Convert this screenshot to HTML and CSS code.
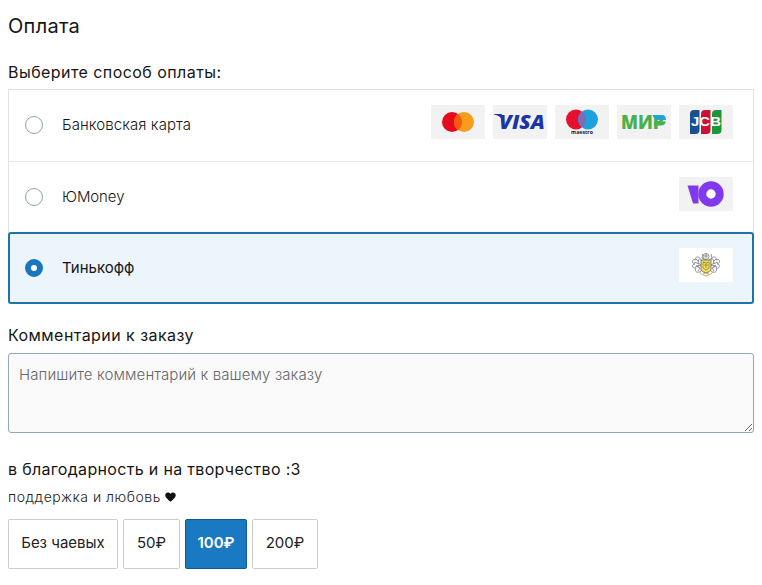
FILE: index.html
```html
<!DOCTYPE html>
<html lang="ru">

<head>
    <meta charset="utf-8">
    <title>Оплата</title>
    <link rel="stylesheet" href="styles.css">
</head>

<body>
    <form class="checkout">
        <h1 class="title">Оплата</h1>
        <p class="label label-pay">Выберите способ оплаты:</p>
        <div class="methods">
            <label class="method">
                <input class="radio" type="radio" name="pay">
                <span class="method-name">Банковская карта</span>
                <span class="logos">
                    <svg class="logo" viewBox="0 0 54 34">
                        <circle cx="21" cy="17" r="10" fill="#e60a1e" />
                        <circle cx="33" cy="17" r="10" fill="#f59d1c" />
                        <path d="M27 9a10 10 0 0 1 0 16a10 10 0 0 1 0-16z" fill="#fa5a0c" />
                    </svg>
                    <svg class="logo" viewBox="0 0 54 34">
                        <path d="M1 9h7.500l3 9C9 13 6 10.500 1 9.500z" fill="#1b35a8" />
                        <text class="visa" x="6" y="24" textLength="46" lengthAdjust="spacingAndGlyphs">VISA</text>
                    </svg>
                    <svg class="logo" viewBox="0 0 54 34">
                        <circle cx="21" cy="14.500" r="10" fill="#e6102c" />
                        <circle cx="33" cy="14.500" r="10" fill="#1ea0dc" />
                        <path d="M27 6.500a10 10 0 0 1 0 16a10 10 0 0 1 0-16z" fill="#7d6cb8" />
                        <text class="maestro" x="16" y="29" textLength="22" lengthAdjust="spacingAndGlyphs">maestro</text>
                    </svg>
                    <svg class="logo" viewBox="0 0 54 34">
                        <text class="mir" x="4" y="24" textLength="43" lengthAdjust="spacingAndGlyphs">МИР</text>
                        <path d="M35.500 10H45q4 0 4 5h-7q-5 0-6.500-5z" fill="#25a3d8" />
                        <path d="M37 16.500h12q-1 4-5 4h-7z" fill="#4ab04e" />
                    </svg>
                    <svg class="logo" viewBox="0 0 54 34">
                        <path d="M15 5h5.500v20q0 4-4 4h-5.500V9q0-4 4-4z" fill="#1b4f94" />
                        <path d="M26 5h5.500v20q0 4-4 4h-5.500V9q0-4 4-4z" fill="#cc1136" />
                        <path d="M37 5h5.500v20q0 4-4 4h-5.500V9q0-4 4-4z" fill="#1d9639" />
                        <text class="jcb" x="12" y="21" textLength="30" lengthAdjust="spacingAndGlyphs">JCB</text>
                    </svg>
                </span>
            </label>
            <label class="method">
                <input class="radio" type="radio" name="pay">
                <span class="method-name name-yoo">ЮMoney</span>
                <span class="logos">
                    <svg class="logo" viewBox="0 0 54 34">
                        <path d="M8.500 8.500h11v18h-5.500z" fill="#8139ef" />
                        <circle cx="32" cy="17" r="8.700" fill="#fff" stroke="#8139ef" stroke-width="8" />
                    </svg>
                </span>
            </label>
            <label class="method method-active">
                <input class="radio" type="radio" name="pay" checked>
                <span class="method-name">Тинькофф</span>
                <span class="logos">
                    <svg class="logo logo-white" viewBox="0 0 54 34" fill="none" stroke="#85858d" stroke-width=".9">
                        <circle cx="27" cy="8.500" r="3" />
                        <path d="M24 6l-1 4 3 2m4 0l3-2-1-4M25 8h4M27 5.500v5" />
                        <path d="M22 12c-2-5-7-3-5 0-4-2-5 3-1 4-4 0-3 5 1 4-2 3 1 6 5 3M20 11l-1 4 3 2-5 1 4 2-2 3M15 14l5 2M17 11l3 3M16 19l4-1" />
                        <path d="M32 12c2-5 7-3 5 0 4-2 5 3 1 4 4 0 3 5-1 4 2 3-1 6-5 3M34 11l1 4-3 2 5 1-4 2 2 3M39 14l-5 2M37 11l-3 3M38 19l-4-1" />
                        <path d="M22 12h10v10q-1 2-5 3-4-1-5-3z" fill="#e9dc68" stroke="#777565" />
                        <path d="M24 14l3 1 3-1v6l-3 2-3-2zM27 15v5M25 17h4" stroke="#a8932f" />
                        <path d="M20 24q3 3 7 4 4-1 7-4M24 26l3-1 3 1" stroke="#bba95a" />
                    </svg>
                </span>
            </label>
        </div>

        <p class="label label-comment">Комментарии к заказу</p>
        <textarea class="comment" placeholder="Напишите комментарий к вашему заказу"></textarea>

        <p class="label label-tips">в благодарность и на творчество :3</p>
        <p class="hint">поддержка и любовь
            <svg class="heart" viewBox="0 0 11 10">
                <path d="M5.500 9.800C3 7.500.300 5.800.300 3 .300.300 3.800-.500 5.500 1.800 7.200-.500 10.700.300 10.700 3c0 2.800-2.700 4.500-5.200 6.800z" fill="#111" />
            </svg>
        </p>
        <div class="tips">
            <button type="button" class="tip tip-none">Без чаевых</button>
            <button type="button" class="tip tip-50">50₽</button>
            <button type="button" class="tip tip-100 tip-active">100₽</button>
            <button type="button" class="tip tip-200">200₽</button>
        </div>
    </form>
</body>

</html>
```

FILE: styles.css
```css
body {
    margin: 0;
    background: #fff;
    color: #151515;
    font-family: Inter, Roboto, "Liberation Sans", sans-serif;
}

.checkout {
    padding: 14px 8px 0;
}

.title {
    margin: 0 0 22px;
    font-size: 20px;
    font-weight: 400;
    letter-spacing: .3px;
    line-height: 24px;
}

.label {
    margin: 0;
    font-size: 16px;
    letter-spacing: .44px;
    line-height: 24px;
}

.label-pay {
    margin-bottom: 5px;
}

.methods {
    border: 1px solid #e2e2e2;
    border-bottom: none;
}

.method {
    display: flex;
    align-items: center;
    box-sizing: border-box;
    height: 72px;
    padding: 0 20px 8px 16px;
    border-bottom: 1px solid #e6e6e6;
    font-size: 15px;
    font-weight: 300;
    letter-spacing: .06px;
}

.method + .method {
    height: 70px;
    padding-bottom: 6px;
    border-bottom: none;
}

/* covers the list border on every side */
.method + .method-active {
    height: 72px;
    margin: 0 -1px;
    padding: 0 19px 6px 15px;
    border: 2px solid #1f73a8;
    border-radius: 3px;
    background: #ecf4fc;
    font-weight: 400;
    letter-spacing: 0;
}

.radio {
    appearance: none;
    box-sizing: border-box;
    width: 18px;
    height: 18px;
    margin: 6px 19px 0 0;
    border: 1px solid #8fa69f;
    border-radius: 50%;
    background: #fff;
}

.radio:checked {
    border: 6px solid #1976bd;
}

.method-name {
    margin-top: 5px;
}

.name-yoo {
    margin-top: 4px;
    letter-spacing: -.1px;
}

.logos {
    display: flex;
    gap: 8px;
    margin-left: auto;
}

.logo {
    width: 54px;
    height: 34px;
    background: #f2f2f2;
}

.logo-white {
    background: #fff;
}

.visa {
    fill: #1b35a8;
    font: italic 800 20px "Open Sans", sans-serif;
}

.maestro {
    fill: #222;
    font: 700 6px "Open Sans", sans-serif;
}

.mir {
    fill: #4ab04e;
    font: 800 19px "Open Sans", sans-serif;
}

.jcb {
    fill: #fff;
    font: 700 12px "Liberation Sans", sans-serif;
}

.label-comment {
    margin: 19px 0 6px;
}

.comment {
    display: block;
    box-sizing: border-box;
    width: 100%;
    height: 80px;
    padding: 11px 10px;
    border: 1px solid #8fa9b9;
    border-radius: 3px;
    background: #fafafa;
    font: 300 15px/20px Inter, Roboto, sans-serif;
    letter-spacing: .1px;
    resize: vertical;
}

.comment::placeholder {
    color: #666;
}

.label-tips {
    margin-top: 24px;
    letter-spacing: .32px;
}

.hint {
    margin: 6px 0 12px;
    color: #222;
    font-size: 14px;
    font-weight: 300;
    letter-spacing: .53px;
    line-height: 20px;
}

.heart {
    width: 11px;
    height: 10px;
}

.tips {
    display: flex;
    gap: 5px;
}

.tip {
    height: 50px;
    padding: 0 0 3px;
    border: 1px solid #ccc;
    border-radius: 2px;
    background: #fff;
    color: #222;
    font: 15px Inter, Roboto, sans-serif;
}

.tip-none {
    width: 110px;
}

.tip-50 {
    width: 57px;
}

.tip-100 {
    width: 62px;
}

.tip-200 {
    width: 66px;
}

.tip-active {
    border-color: #17588c;
    background: #1979c3;
    color: #fff;
    font-weight: 600;
}
```
